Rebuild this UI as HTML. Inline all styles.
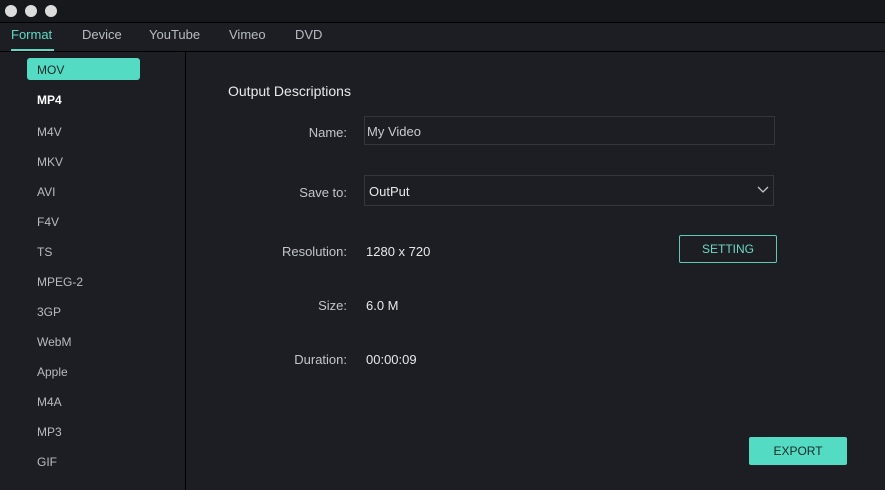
<!DOCTYPE html>
<html><head><style>
body{margin:0;width:885px;height:490px;background:#1c1e23;font-family:"Liberation Sans",sans-serif;position:relative;overflow:hidden;color:#c9ccd1}
.a{position:absolute}
.dot{width:12px;height:12px;border-radius:50%;background:#dcdcdc;top:5px}
.tab{top:27px;font-size:13px;color:#b8bcc2}
.side{left:37px;font-size:12px;color:#b8bcc2}
.lbl{font-size:13px;color:#c2c5ca;text-align:right;width:150px;left:197px}
.val{font-size:13px;color:#e6e8ea;left:366px}
</style></head><body>
<div class="a" style="left:0;top:0;width:885px;height:22px;background:#17181c;border-bottom:1px solid #000"></div>
<div class="a dot" style="left:5px"></div><div class="a dot" style="left:25px"></div><div class="a dot" style="left:45px"></div>
<div class="a" style="left:0;top:51px;width:885px;height:1px;background:#000"></div>
<div class="a tab" style="left:11px;color:#5fd8c4">Format</div>
<div class="a" style="left:11px;top:49px;width:43px;height:2px;background:#5fd8c4"></div>
<div class="a tab" style="left:82px">Device</div>
<div class="a tab" style="left:149px">YouTube</div>
<div class="a tab" style="left:229px">Vimeo</div>
<div class="a tab" style="left:295px">DVD</div>
<div class="a" style="left:185px;top:52px;width:1px;height:438px;background:#000"></div>
<div class="a" style="left:27px;top:58px;width:113px;height:22px;background:#54dbc4;border-radius:3px"></div>
<div class="a side" style="top:63px;color:#1a2a28">MOV</div>
<div class="a side" style="top:93px;color:#fff;font-weight:bold">MP4</div>
<div class="a side" style="top:125px">M4V</div>
<div class="a side" style="top:155px">MKV</div>
<div class="a side" style="top:185px">AVI</div>
<div class="a side" style="top:215px">F4V</div>
<div class="a side" style="top:245px">TS</div>
<div class="a side" style="top:275px">MPEG-2</div>
<div class="a side" style="top:305px">3GP</div>
<div class="a side" style="top:335px">WebM</div>
<div class="a side" style="top:365px">Apple</div>
<div class="a side" style="top:395px">M4A</div>
<div class="a side" style="top:425px">MP3</div>
<div class="a side" style="top:455px">GIF</div>
<div class="a" style="left:228px;top:83px;font-size:14px;color:#e8eaec">Output Descriptions</div>
<div class="a lbl" style="top:125px">Name:</div>
<div class="a" style="left:364px;top:116px;width:411px;height:29px;border:1px solid #33363c;box-sizing:border-box"></div>
<div class="a val" style="left:367px;top:124px;color:#c8cbd0">My Video</div>
<div class="a lbl" style="top:185px">Save to:</div>
<div class="a" style="left:364px;top:175px;width:410px;height:31px;border:1px solid #33363c;box-sizing:border-box"></div>
<div class="a val" style="left:369px;top:184px">OutPut</div>
<svg class="a" style="left:757px;top:185px" width="12" height="10"><path d="M1 2 L6 7 L11 2" stroke="#c2c5ca" fill="none" stroke-width="1.3"/></svg>
<div class="a lbl" style="top:244px">Resolution:</div>
<div class="a val" style="top:244px">1280 x 720</div>
<div class="a" style="left:679px;top:235px;width:98px;height:28px;border:1px solid #5fc9b6;box-sizing:border-box;border-radius:2px;color:#6fd6c3;font-size:12px;text-align:center;line-height:26px">SETTING</div>
<div class="a lbl" style="top:298px">Size:</div>
<div class="a val" style="top:298px">6.0 M</div>
<div class="a lbl" style="top:352px">Duration:</div>
<div class="a val" style="top:352px">00:00:09</div>
<div class="a" style="left:749px;top:437px;width:98px;height:28px;background:#54dbc4;color:#1a2a28;font-size:12px;text-align:center;line-height:28px;border-radius:2px">EXPORT</div>
</body></html>
